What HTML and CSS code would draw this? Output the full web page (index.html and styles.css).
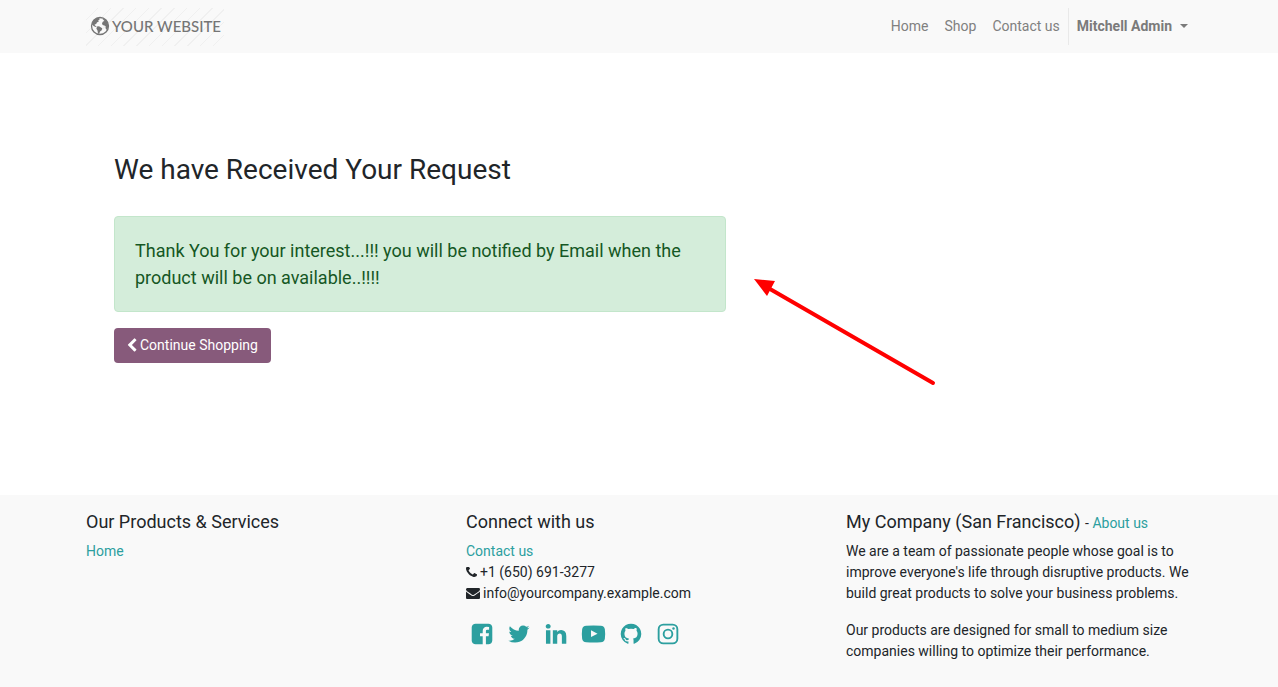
FILE: index.html
```html
<!DOCTYPE html>
<html lang="en">
<head>
<meta charset="utf-8">
<meta name="viewport" content="width=device-width, initial-scale=1">
<title>We have Received Your Request</title>
<link rel="stylesheet" href="styles.css">
</head>
<body>
<header class="site-header">
  <div class="container header-row">
    <a class="logo" href="#">
      <svg class="globe" viewBox="0 0 20 20" aria-hidden="true">
        <circle cx="10" cy="10" r="8.500" fill="none" stroke="currentColor" stroke-width="1.300"/>
        <path fill="currentColor" d="M2 7.500 4 4l3.500-2.200 1.800.2.300 1.500-1.400.8.600 1.300-1.900 1-.700 1.500-1.600.5.300 1 1.600.7-.4.600-2.200-.7L2 8.500zM7 10.600l2-.3 3.200 2-.5 2-1.700 1.200-.8 2.200-1.200-.3-.5-2.900-1.100-1.700zM12.500 3l2.600.3 2.400 2.900 1 3.400-.9 3.600-1.300.5-.8-1.700.2-1.800-1.400-.6-1.700-.5-.6-1.900 1-1.600 1.500-.5-.8-.9z"/>
      </svg>
      <span>YOUR WEBSITE</span>
    </a>
    <nav class="nav">
      <a class="nav-link" href="#">Home</a>
      <a class="nav-link" href="#">Shop</a>
      <a class="nav-link" href="#">Contact us</a>
      <button class="user-menu" type="button" aria-haspopup="true">Mitchell Admin<span class="caret"></span></button>
    </nav>
  </div>
</header>

<main class="main">
  <div class="content">
    <h1 class="title">We have Received Your Request</h1>
    <div class="alert" role="alert">Thank You for your interest...!!! you will be notified by Email when the product will be on available..!!!!</div>
    <a class="button" href="#">
      <svg class="icon-chevron" viewBox="300 0 1216 1792" aria-hidden="true"><path fill="currentColor" d="M1427 301l-531 531 531 531q19 19 19 45t-19 45l-166 166q-19 19-45 19t-45-19l-742-742q-19-19-19-45t19-45l742-742q19-19 45-19t45 19l166 166q19 19 19 45t-19 45z"/></svg>
      <span>Continue Shopping</span>
    </a>
  </div>
  <svg class="arrow" viewBox="0 0 184 108" aria-hidden="true">
    <path d="M16 10 179 104" stroke="#f00" stroke-width="4" stroke-linecap="round"/>
    <path d="M0 0 21 2 13 17z" fill="#f00"/>
  </svg>
</main>

<footer class="site-footer">
  <div class="container footer-grid">
    <section>
      <h2 class="footer-title">Our Products &amp; Services</h2>
      <a class="link" href="#">Home</a>
    </section>
    <section>
      <h2 class="footer-title">Connect with us</h2>
      <ul class="contacts">
        <li><a class="link" href="#">Contact us</a></li>
        <li><svg class="icon-phone" viewBox="192 256 1408 1408" aria-hidden="true"><path fill="currentColor" d="M1600 1240q0 27-10 70.500t-21 68.500q-21 50-122 106-94 51-186 51-27 0-53-3.500t-57.500-12.500-47-14.500-55.500-20.500-49-18q-98-35-175-83-127-79-264-216t-216-264q-48-77-83-175-3-9-18-49t-20.500-55.500-14.500-47-12.500-57.500-3.500-53q0-92 51-186 56-101 106-122 25-11 68.500-21t70.500-10q14 0 21 3 18 6 53 76 11 19 30 54t35 63.500 31 53.500q3 4 17.500 25t21.500 35.500 7 28.500q0 20-28.500 50t-62 55-62 53-28.500 46q0 9 5 22.500t8.500 20.500 14 24 11.500 19q76 137 174 235t235 174q2 1 19 11.500t24 14 20.500 8.500 22.500 5q18 0 46-28.500t53-62 55-62 50-28.500q14 0 28.500 7t35.500 21.500 25 17.500q25 15 53.500 31t63.500 35 54 30q70 35 76 53 3 7 3 21z"/></svg><span>+1 (650) 691-3277</span></li>
        <li><svg class="icon-mail" viewBox="0 128 1792 1664" aria-hidden="true"><path fill="currentColor" d="M1792 710v794q0 66-47 113t-113 47h-1472q-66 0-113-47t-47-113v-794q44 49 101 87 362 246 497 345 57 42 92.500 65.500t94.500 48 110 24.500h2q51 0 110-24.500t94.500-48 92.500-65.500q170-123 498-345 57-39 100-87zm0-294q0 79-49 151t-122 123q-376 261-468 325-10 7-42.500 31t-54 38.500-52 32.500-57.500 27-50 9h-2q-23 0-50-9t-57.500-27-52-32.500-54-38.500-42.500-31q-91-64-262-182.500t-205-142.500q-62-42-117-115.500t-55-136.500q0-78 41.500-130t118.500-52h1472q65 0 112.500 47t47.500 113z"/></svg><span>info@yourcompany.example.com</span></li>
      </ul>
      <div class="social">
        <a href="#" aria-label="Facebook"><svg viewBox="0 0 1792 1792"><path d="M1376 128q119 0 203.500 84.500t84.500 203.500v960q0 119-84.500 203.500t-203.500 84.500h-188v-595h199l30-232h-229v-148q0-56 23.500-84t91.500-28l122-1v-207q-63-9-178-9-136 0-217.500 80t-81.500 226v171h-200v232h200v595h-532q-119 0-203.500-84.500t-84.500-203.500v-960q0-119 84.500-203.500t203.500-84.500h960z"/></svg></a>
        <a href="#" aria-label="Twitter"><svg viewBox="0 0 1792 1792"><path d="M1684 408q-67 98-162 167 1 14 1 42 0 130-38 259.500t-115.500 248.500-184.500 210.500-258 146-323 54.500q-271 0-496-145 35 4 78 4 225 0 401-138-105-2-188-64.500t-114-159.500q33 5 61 5 43 0 85-11-112-23-185.500-111.500t-73.500-205.500v-4q68 38 146 41-66-44-105-115t-39-154q0-88 44-163 121 149 294.500 238.500t371.500 99.500q-8-38-8-74 0-134 94.500-228.500t228.500-94.500q140 0 236 102 109-21 205-78-37 115-142 178 93-10 186-50z"/></svg></a>
        <a href="#" aria-label="LinkedIn"><svg viewBox="0 0 1792 1792"><path d="M477 625v991h-330v-991h330zm21-306q1 73-50.500 122t-135.500 49h-2q-82 0-132-49t-50-122q0-74 51.500-122.500t134.500-48.500 133 48.500 51 122.500zm1166 729v568h-329v-530q0-105-40.500-164.500t-126.500-59.500q-63 0-105.500 34.500t-63.500 85.500q-11 30-11 81v553h-329q2-399 2-647t-1-296l-1-48h329v144h-2q20-32 41-56t56.500-52 87-43.500 114.500-15.500q171 0 275 113.500t104 332.500z"/></svg></a>
        <a href="#" aria-label="YouTube"><svg class="wide" viewBox="0 0 1792 1792"><path fill-rule="evenodd" d="M711 1128l484-250-484-253zM896 266q270 0 540 16 140 4 216 70 66 60 92 190 48 340 0 708-26 130-92 190-76 66-216 70-540 32-1080 0-140-4-216-70-66-60-92-190-48-340 0-708 26-130 92-190 76-66 216-70 270-16 540-16z"/></svg></a>
        <a href="#" aria-label="GitHub"><svg viewBox="0 0 1792 1792"><path d="M896 128q209 0 385.500 103t279.500 279.500 103 385.500q0 251-146.500 451.500t-378.500 277.500q-27 5-40-7t-13-30q0-3 .5-76.500t.5-134.500q0-97-52-142 57-6 102.500-18t94-39 81-66.500 53-105 20.500-150.500q0-119-79-206 37-91-8-204-28-9-81 11t-92 44l-38 24q-93-26-192-26t-192 26q-16-11-42.500-27t-83.500-38.500-85-13.500q-45 113-8 204-79 87-79 206 0 85 20.500 150t52.500 105 80.500 67 94 39 102.500 18q-39 36-49 103-21 10-45 15t-57 5-65.500-21.500-55.500-62.500q-19-32-48.500-52t-49.500-24l-20-3q-21 0-29 4.500t-5 11.500 9 14 13 12l7 5q22 10 43.500 38t31.500 51l10 23q13 38 44 61.500t67 30 69.500 7 55.500-3.500l23-4q0 38 .5 88.500t.5 54.500q0 18-13 30t-40 7q-232-77-378.500-277.500t-146.500-451.500q0-209 103-385.500t279.500-279.500 385.500-103z"/></svg></a>
        <a href="#" aria-label="Instagram"><svg viewBox="0 0 1792 1792"><rect x="198" y="198" width="1396" height="1396" rx="350" fill="none" stroke="currentColor" stroke-width="140"/><circle cx="896" cy="896" r="325" fill="none" stroke="currentColor" stroke-width="140"/><circle cx="1306" cy="486" r="92"/></svg></a>
      </div>
    </section>
    <section>
      <h2 class="footer-title">My Company (San Francisco) <small class="about">- <a class="link" href="#">About us</a></small></h2>
      <p class="text">We are a team of passionate people whose goal is to improve everyone's life through disruptive products. We build great products to solve your business problems.</p>
      <p class="text">Our products are designed for small to medium size companies willing to optimize their performance.</p>
    </section>
  </div>
</footer>
</body>
</html>
```
FILE: styles.css
```css
* { box-sizing: border-box; }

body {
  margin: 0;
  min-height: 100vh;
  display: flex;
  flex-direction: column;
  background: #fff;
  color: #212529;
  font: 14px/21px Roboto, sans-serif;
}

a { text-decoration: none; }
.link { color: #2c9f9f; }

.site-header, .site-footer {
  padding-left: 4px;
  background: #f9f9f9;
}

.container {
  width: 100%;
  max-width: 1140px;
  margin: 0 auto;
  padding: 0 15px;
}

.header-row {
  display: flex;
  align-items: center;
  justify-content: space-between;
  min-height: 53px;
}

.logo {
  display: flex;
  align-items: center;
  gap: 2px;
  height: 38px;
  padding: 0 3px 2px 4px;
  color: #757575;
  font: 500 15px/24px Lato, sans-serif;
  background: repeating-linear-gradient(135deg, #f9f9f9 0 8px, #f0f0f0 8px 9px);
}
.globe { width: 20px; height: 20px; }

.nav { display: flex; align-items: center; }
.nav-link { padding: 8px; color: #808080; }

.user-menu {
  display: flex;
  align-items: center;
  gap: 8px;
  height: 37px;
  padding: 0 8px;
  border: 0;
  border-left: 1px solid #e9e9e9;
  background: none;
  color: #7b7b7b;
  font: bold 14px/21px Roboto, sans-serif;
}
.caret {
  margin-bottom: 2px;
  border: 4px solid transparent;
  border-top-color: currentColor;
  border-bottom: 0;
}

.main {
  position: relative;
  flex: 1;
  padding: 100px 114px 132px;
}
.content { max-width: 612px; }

.title {
  margin: 0 0 29px;
  font-size: 28px;
  line-height: 34px;
  font-weight: 400;
}

.alert {
  margin-bottom: 16px;
  padding: 20px;
  border: 1px solid #c3e6cb;
  border-radius: 4px;
  background: #d4edda;
  color: #155724;
  font-size: 18px;
  line-height: 27px;
}

.button {
  display: inline-flex;
  align-items: center;
  gap: 3px;
  padding: 7px 13px;
  border-radius: 4px;
  background: #875a7b;
  color: #fff;
}
.icon-chevron { width: 10px; height: 15px; }

.arrow {
  position: absolute;
  left: 754px;
  top: 226px;
  width: 184px;
  height: 108px;
  fill: none;
}

.site-footer { min-height: 192px; padding-top: 16px; padding-bottom: 16px; }

.footer-grid {
  display: grid;
  grid-template-columns: repeat(3, 1fr);
  gap: 30px;
}

.footer-title {
  margin: 0 0 8px;
  font-size: 18px;
  line-height: 22px;
  font-weight: 400;
}
.about { font-size: 14px; line-height: 14px; }

.text { margin: 0 0 16px; }
.text:last-child { margin-bottom: 0; }

.contacts { margin: 0; padding: 0; list-style: none; }
.contacts li { display: flex; align-items: center; gap: 3px; }
.icon-phone { width: 11px; height: 11px; }
.icon-mail { width: 14px; height: 13px; }

.social {
  display: flex;
  gap: 13px;
  margin-top: 18px;
  padding-left: 4px;
}
.social a { display: flex; color: #2c9f9f; }
.social svg { width: 24px; height: 24px; fill: currentColor; }
.social .wide { width: 25px; }

@media (max-width: 800px) {
  .main { padding: 40px 20px; }
  .arrow { display: none; }
  .header-row { flex-wrap: wrap; }
  .footer-grid { grid-template-columns: 1fr; }
}
```
